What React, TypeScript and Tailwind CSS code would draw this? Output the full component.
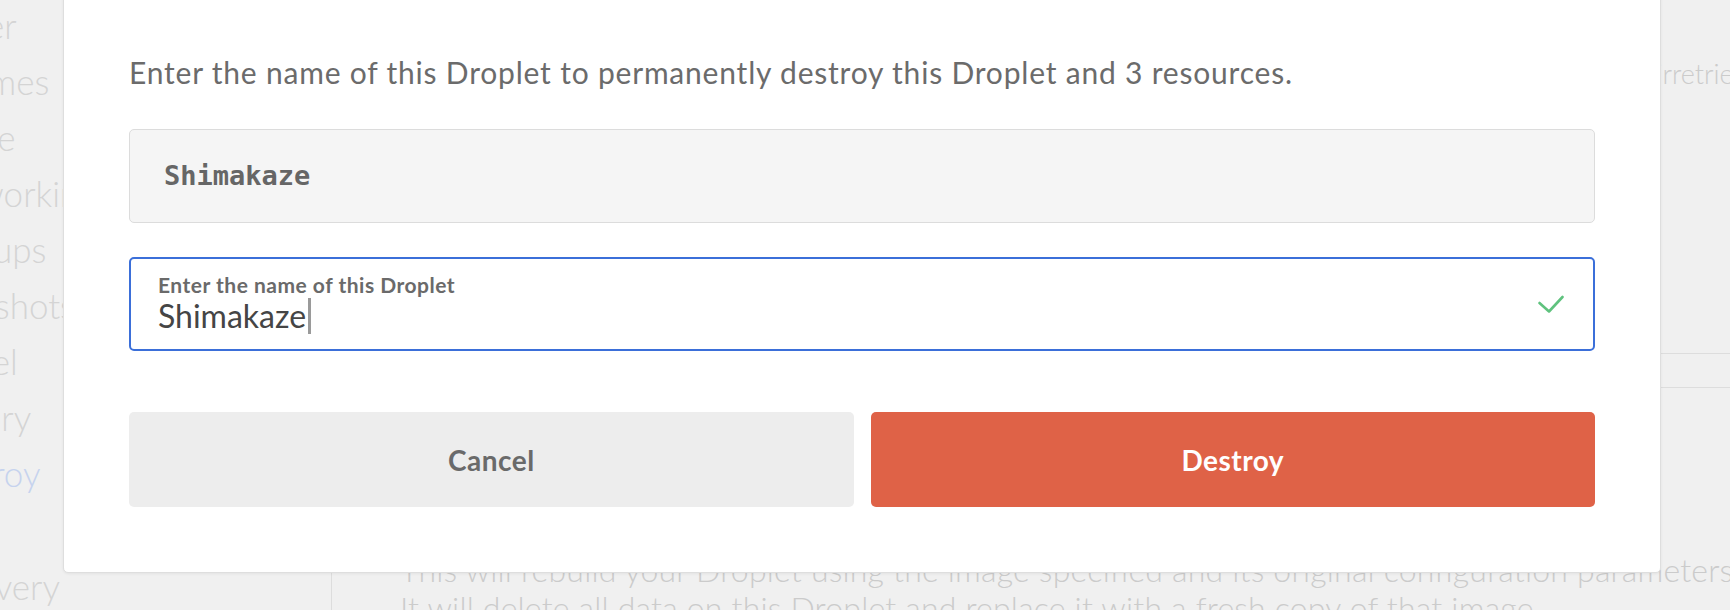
import { useState } from "react";

const sidebarItems = [
  "Power",
  "Volumes",
  "Resize",
  "Networking",
  "Backups",
  "Snapshots",
  "Kernel",
  "History",
  "Destroy",
];

const CheckMark = () => (
  <svg width="26" height="19" viewBox="0 0 26 19" fill="none" aria-hidden="true">
    <polyline
      points="1.5,8 11,16.5 24.5,2"
      stroke="#5fc27e"
      strokeWidth="2.6"
      strokeLinecap="round"
      strokeLinejoin="round"
    />
  </svg>
);

const DestroyModal = () => {
  const [name] = useState("Shimakaze");

  return (
    <div className="absolute left-[63px] top-[-4px] h-[577px] w-[1598px] rounded-b-[5px] border border-[#dedede] bg-white px-[65px] pt-[57px] shadow-[0_1px_3px_rgba(0,0,0,0.06)]">
      <p className="text-[30px] leading-[36px] tracking-[0.8px] text-[#6b6b6b]">
        Enter the name of this Droplet to permanently destroy this Droplet and 3 resources.
      </p>

      <div className="mt-[39px] flex h-[94px] items-center rounded-[5px] border border-[#dcdcdc] bg-[#f5f5f5] pl-[34px]">
        <span className="font-['DejaVu_Sans_Mono',monospace] text-[27px] font-bold text-[#666666]">
          Shimakaze
        </span>
      </div>

      <div className="mt-[34px] flex h-[94px] items-center justify-between rounded-[5px] border-2 border-[#3b6fd9] pl-[27px] pr-[29px]">
        <div className="flex flex-col">
          <span className="text-[21px] leading-[24px] tracking-[0.5px] font-bold text-[#6a6a6a]">
            Enter the name of this Droplet
          </span>
          <div className="flex items-center">
            <span className="text-[32px] leading-[38px] text-[#454545]">{name}</span>
            <span className="ml-[2px] h-[36px] w-[3px] bg-[#9a9a9a]" />
          </div>
        </div>
        <CheckMark />
      </div>

      <div className="mt-[61px] flex gap-[17px]">
        <button
          type="button"
          className="flex h-[95px] flex-1 items-center justify-center rounded-[5px] bg-[#ededed] text-[28px] font-bold tracking-[0.5px] text-[#6a6a6a]"
        >
          Cancel
        </button>
        <button
          type="button"
          className="flex h-[95px] flex-1 items-center justify-center rounded-[5px] bg-[#df6247] text-[28px] font-bold tracking-[0.5px] text-white"
        >
          Destroy
        </button>
      </div>
    </div>
  );
};

export default function App() {
  return (
    <div className="relative h-[610px] w-[1730px] overflow-hidden bg-[#f0f0f0] font-['Lato',sans-serif]">
      <div className="flex h-full">
        <aside className="w-[332px] shrink-0 overflow-hidden border-r border-[#dddddd]">
          <ul className="-ml-[79px] -mt-[3px] flex flex-col text-[35px] font-light text-[#d4d4d4]">
            {sidebarItems.map((item) => (
              <li
                key={item}
                className={`h-[56px] leading-[56px] whitespace-nowrap ${item === "Destroy" ? "text-[#c6d3ee]" : ""}`}
              >
                {item}
              </li>
            ))}
            <li className="mt-[57px] h-[56px] leading-[56px]">Recovery</li>
          </ul>
        </aside>

        <main className="flex-1 overflow-hidden pl-[68px] font-light text-[#cbcbcb]">
          <p className="-mr-[71px] mt-[53px] whitespace-nowrap text-right text-[27px] leading-[42px]">
            Once a Droplet is destroyed, its data will be irretrievable.
          </p>
          <div className="-ml-[68px] mt-[258px] h-[35px] border-y border-[#dddddd]" />
          <p className="mt-[163px] whitespace-nowrap text-[32px] leading-[38px] tracking-[0.2px]">
            This will rebuild your Droplet using the image specified and its original configuration parameters
            <br />
            It will delete all data on this Droplet and replace it with a fresh copy of that image.
          </p>
        </main>
      </div>

      <DestroyModal />
    </div>
  );
}
